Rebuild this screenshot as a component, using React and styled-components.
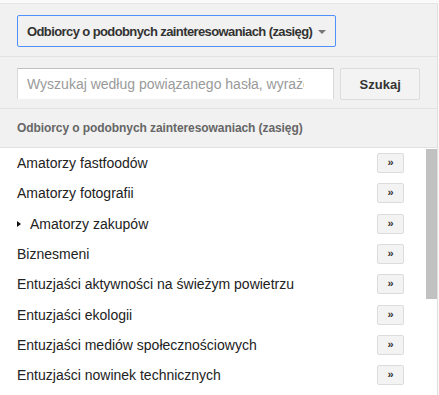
import styled, { createGlobalStyle } from "styled-components";

const GlobalStyle = createGlobalStyle`
  html, body {
    margin: 0;
    padding: 0;
    background: #fafafa;
  }
  body {
    font-family: "Liberation Sans", Arial, sans-serif;
    overflow: hidden;
  }
`;

const Panel = styled.div`
  width: 437px;
  margin-top: 3px;
  border-top: 1px solid #e5e5e5;
  border-right: 1px solid #e0e0e0;
  background: #f1f1f1;
`;

const Section = styled.div`
  display: flex;
  gap: 6px;
  padding: ${(p) => p.$pad};
  border-bottom: 1px solid #e2e2e2;
`;

const Select = styled.div`
  box-sizing: border-box;
  width: 319px;
  height: 32px;
  display: flex;
  align-items: center;
  justify-content: space-between;
  padding: 0 9px 0 9px;
  border: 1px solid #4d90fe;
  border-radius: 2px;
  background: #f1f1f1;
  color: #333;
  font-size: 13px;
  font-weight: bold;
  letter-spacing: -0.6px;
  white-space: nowrap;
`;

const Caret = styled.span`
  width: 0;
  height: 0;
  border-left: 4px solid transparent;
  border-right: 4px solid transparent;
  border-top: 4px solid #777;
  margin-top: 1px;
`;

const SearchInput = styled.input`
  box-sizing: border-box;
  width: 319px;
  height: 31px;
  margin: 0;
  padding: 0 29px 0 9px;
  border: 1px solid #d9d9d9;
  border-top-color: #c0c0c0;
  border-bottom: none;
  border-radius: 1px;
  background: #fff;
  font-family: inherit;
  font-size: 14px;
  outline: none;
  &::placeholder {
    color: #9a9a9a;
  }
`;

const Button = styled.button`
  box-sizing: border-box;
  width: 80px;
  height: 32px;
  margin: 0;
  border: 1px solid #dcdcdc;
  border-radius: 2px;
  background: #f3f3f3;
  color: #333;
  font-family: inherit;
  font-size: 13px;
  font-weight: bold;
`;

const Header = styled.div`
  height: 38px;
  display: flex;
  align-items: center;
  padding: 0 17px;
  border-bottom: 1px solid #e2e2e2;
  color: #666;
  font-size: 12px;
  font-weight: bold;
  letter-spacing: -0.08px;
  white-space: nowrap;
`;

const List = styled.div`
  height: 247px;
  display: flex;
  overflow: hidden;
  background: #fff;
`;

const Items = styled.div`
  flex: 1;
`;

const ScrollTrack = styled.div`
  width: 11px;
  padding-top: 1px;
`;

const Thumb = styled.div`
  height: 150px;
  background: #c1c1c1;
`;

const Row = styled.div`
  height: 30.33px;
  display: flex;
  align-items: center;
  padding: 0 22px 0 17px;
  color: #222;
  font-size: 14px;
`;

const Label = styled.span`
  flex: 1;
  display: flex;
  align-items: center;
  gap: 9px;
  white-space: nowrap;
`;

const Arrow = styled.span`
  width: 0;
  height: 0;
  border-top: 3.5px solid transparent;
  border-bottom: 3.5px solid transparent;
  border-left: 4px solid #111;
`;

const AddButton = styled.button`
  box-sizing: border-box;
  width: 27px;
  height: 20px;
  margin: 0;
  padding: 0 0 1px;
  border: 1px solid #dcdcdc;
  border-radius: 2px;
  background: #f3f3f3;
  color: #333;
  font-family: inherit;
  font-size: 11px;
  font-weight: bold;
  line-height: 1;
`;

const items = [
  { name: "Amatorzy fastfoodów" },
  { name: "Amatorzy fotografii" },
  { name: "Amatorzy zakupów", nested: true },
  { name: "Biznesmeni" },
  { name: "Entuzjaści aktywności na świeżym powietrzu" },
  { name: "Entuzjaści ekologii" },
  { name: "Entuzjaści mediów społecznościowych" },
  { name: "Entuzjaści nowinek technicznych" },
];

export default function App() {
  return (
    <>
      <GlobalStyle />
      <Panel>
        <Section $pad="11px 17px 9px">
          <Select>
            Odbiorcy o podobnych zainteresowaniach (zasięg)
            <Caret />
          </Select>
        </Section>
        <Section $pad="11px 17px 8px">
          <SearchInput placeholder="Wyszukaj według powiązanego hasła, wyrażenia lub witryny" />
          <Button>Szukaj</Button>
        </Section>
        <Header>Odbiorcy o podobnych zainteresowaniach (zasięg)</Header>
        <List>
          <Items>
            {items.map((item) => (
              <Row key={item.name}>
                <Label>
                  {item.nested && <Arrow />}
                  {item.name}
                </Label>
                <AddButton>»</AddButton>
              </Row>
            ))}
          </Items>
          <ScrollTrack>
            <Thumb />
          </ScrollTrack>
        </List>
      </Panel>
    </>
  );
}
